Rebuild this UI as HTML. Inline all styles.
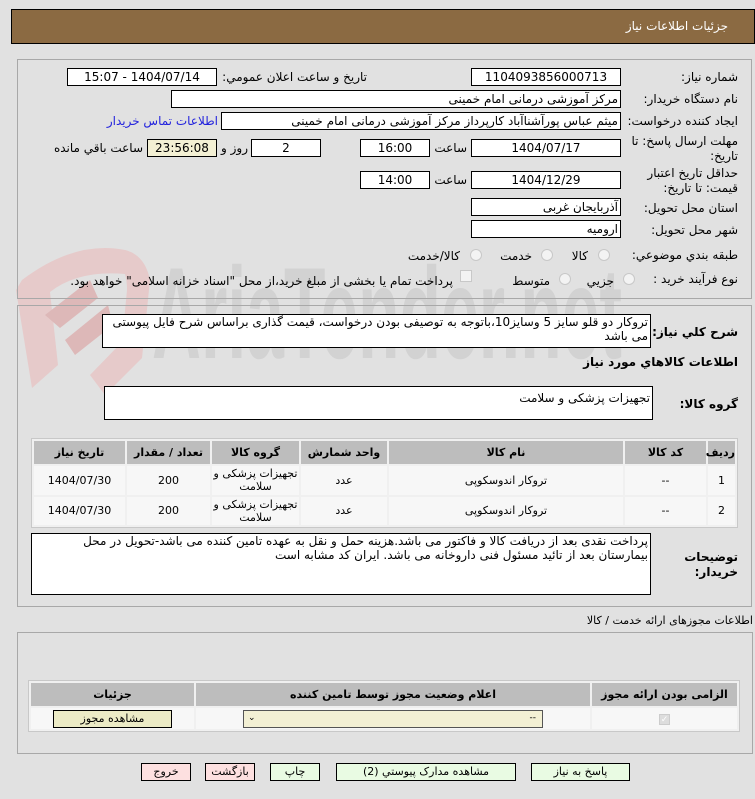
<!DOCTYPE html>
<html><head><meta charset="utf-8">
<style>
*{box-sizing:border-box;margin:0;padding:0}
body{width:755px;height:799px;background:#e1e1e1;font-family:"DejaVu Sans","Liberation Sans",sans-serif;font-size:11px;color:#000;position:relative;overflow:hidden}
.a{position:absolute}
.lbl{position:absolute;direction:rtl;text-align:right;white-space:nowrap;font-size:12px}
.box{position:absolute;background:#fff;border:1px solid #000;direction:rtl;text-align:center;font-size:12px;line-height:16px;white-space:nowrap;overflow:hidden}
.panel{position:absolute;border:1px solid #a8a8a8}
table{border-collapse:separate;border-spacing:2px;position:absolute;background:#f0f0f0;border:1px solid #c8c8c8;direction:rtl;table-layout:fixed}
th{background:#bdbdbd;font-weight:bold;font-size:11px;height:23px}
td{background:#f7f7f7;text-align:center;font-size:11px}
.btn{position:absolute;border:1px solid #000;background:#e9fbe3;text-align:center;font-size:11px;line-height:16px;height:18px;white-space:nowrap;direction:rtl}
.radio{position:absolute;width:12px;height:12px;border-radius:50%;border:1px solid #c8c8c8;background:#f3f3f3}
</style></head><body>
<!-- watermark -->
<svg class="a" style="left:0;top:240px" width="755" height="160">
<path d="M22 40 Q75 0 125 10 L125 34 Q78 30 50 52 L58 125 L32 148 L16 50 Z" fill="#e6caca"/>
<path d="M125 10 Q145 15 150 40 L142 118 L105 155 L90 135 L122 102 L127 50 Q127 40 125 34 Z" fill="#e6caca"/>
<path d="M45 75 L90 40 L98 58 L60 88 Z M65 100 L108 65 L113 85 L75 115 Z" fill="#ddb8b8"/>
<text x="152" y="118" font-family="Liberation Sans" font-weight="bold" font-size="130" fill="#d2d2d2" textLength="470" lengthAdjust="spacingAndGlyphs">AriaTender.net</text>
</svg>
<div class="a" style="left:11px;top:9px;width:744px;height:35px;background:#8b6a42;border:1px solid #000"></div>
<div class="lbl" style="right:27px;top:19px;color:#fff">جزئيات اطلاعات نياز</div>

<div class="panel" style="left:17px;top:59px;width:735px;height:240px"></div>
<div class="lbl" style="right:17px;top:70px">شماره نياز:</div>
<div class="box" style="left:471px;top:68px;width:150px;height:18px">1104093856000713</div>
<div class="lbl" style="right:388px;top:70px">تاريخ و ساعت اعلان عمومي:</div>
<div class="box" style="left:67px;top:68px;width:150px;height:18px">1404/07/14 - 15:07</div>

<div class="lbl" style="right:17px;top:92px">نام دستگاه خريدار:</div>
<div class="box" style="left:171px;top:90px;width:450px;height:18px;text-align:right;padding-right:2px">مرکز آموزشی درمانی امام خمینی</div>

<div class="lbl" style="right:17px;top:114px">ايجاد کننده درخواست:</div>
<div class="box" style="left:221px;top:112px;width:400px;height:18px;text-align:right;padding-right:2px">میثم عباس پورآشناآباد کارپرداز مرکز آموزشی درمانی امام خمینی</div>
<div class="lbl" style="right:537px;top:114px;color:#2222dd">اطلاعات تماس خريدار</div>

<div class="lbl" style="right:17px;top:134px;line-height:15px">مهلت ارسال پاسخ: تا<br>تاريخ:</div>
<div class="box" style="left:471px;top:139px;width:150px;height:18px">1404/07/17</div>
<div class="lbl" style="right:288px;top:141px">ساعت</div>
<div class="box" style="left:360px;top:139px;width:70px;height:18px">16:00</div>
<div class="box" style="left:251px;top:139px;width:70px;height:18px">2</div>
<div class="lbl" style="right:507px;top:141px">روز و</div>
<div class="box" style="left:147px;top:139px;width:70px;height:18px;background:#f3f0d4">23:56:08</div>
<div class="lbl" style="right:612px;top:141px">ساعت باقي مانده</div>

<div class="lbl" style="right:17px;top:166px;line-height:15px">حداقل تاريخ اعتبار<br>قيمت: تا تاريخ:</div>
<div class="box" style="left:471px;top:171px;width:150px;height:18px">1404/12/29</div>
<div class="lbl" style="right:288px;top:173px">ساعت</div>
<div class="box" style="left:360px;top:171px;width:70px;height:18px">14:00</div>

<div class="lbl" style="right:17px;top:201px">استان محل تحويل:</div>
<div class="box" style="left:471px;top:198px;width:150px;height:18px;text-align:right;padding-right:2px">آذربایجان غربی</div>
<div class="lbl" style="right:17px;top:223px">شهر محل تحويل:</div>
<div class="box" style="left:471px;top:220px;width:150px;height:18px;text-align:right;padding-right:2px">ارومیه</div>

<div class="lbl" style="right:17px;top:248px">طبقه بندي موضوعي:</div>
<div class="radio" style="left:598px;top:249px"></div><div class="lbl" style="right:167px;top:249px">کالا</div>
<div class="radio" style="left:541px;top:249px"></div><div class="lbl" style="right:223px;top:249px">خدمت</div>
<div class="radio" style="left:470px;top:249px"></div><div class="lbl" style="right:295px;top:249px">کالا/خدمت</div>

<div class="lbl" style="right:17px;top:272px">نوع فرآيند خريد :</div>
<div class="radio" style="left:623px;top:273px"></div><div class="lbl" style="right:141px;top:274px">جزيي</div>
<div class="radio" style="left:559px;top:273px"></div><div class="lbl" style="right:205px;top:274px">متوسط</div>
<div class="a" style="left:460px;top:270px;width:12px;height:12px;border:1px solid #c8c8c8;background:#f3f3f3"></div>
<div class="lbl" style="right:302px;top:274px">پرداخت تمام يا بخشی از مبلغ خريد،از محل "اسناد خزانه اسلامی" خواهد بود.</div>

<div class="panel" style="left:17px;top:305px;width:735px;height:302px"></div>
<div class="lbl" style="right:17px;top:325px;font-weight:bold">شرح کلي نياز:</div>
<div class="box" style="left:102px;top:314px;width:549px;height:34px;text-align:right;padding-right:2px;white-space:normal;line-height:14px">تروکار دو قلو سایز 5 وسایز10،باتوجه به توصیفی بودن درخواست، قیمت گذاری براساس شرح فایل پیوستی می باشد</div>
<div class="lbl" style="right:17px;top:355px;font-weight:bold">اطلاعات کالاهاي مورد نياز</div>
<div class="lbl" style="right:17px;top:397px;font-weight:bold">گروه کالا:</div>
<div class="box" style="left:104px;top:386px;width:549px;height:34px;text-align:right;padding-right:2px;padding-top:3px">تجهیزات پزشکی و سلامت</div>

<table style="left:31px;top:438px;width:707px;height:90px">
<colgroup><col style="width:27px"><col style="width:81px"><col><col style="width:86px"><col style="width:87px"><col style="width:83px"><col style="width:91px"></colgroup>
<tr><th>رديف</th><th>کد کالا</th><th>نام کالا</th><th>واحد شمارش</th><th>گروه کالا</th><th>تعداد / مقدار</th><th>تاريخ نياز</th></tr>
<tr><td>1</td><td>--</td><td>تروکار اندوسکوپی</td><td>عدد</td><td style="line-height:13px">تجهیزات پزشکی و سلامت</td><td>200</td><td>1404/07/30</td></tr>
<tr><td>2</td><td>--</td><td>تروکار اندوسکوپی</td><td>عدد</td><td style="line-height:13px">تجهیزات پزشکی و سلامت</td><td>200</td><td>1404/07/30</td></tr>
</table>

<div class="lbl" style="right:17px;top:550px;font-weight:bold;line-height:15px">توضيحات<br>خريدار:</div>
<div class="box" style="left:31px;top:533px;width:620px;height:62px;text-align:right;padding-right:2px;white-space:normal;line-height:14px">پرداخت نقدی بعد از دریافت کالا و فاکتور می باشد.هزینه حمل و نقل به عهده تامین کننده می باشد-تحویل در محل بیمارستان بعد از تائید مسئول فنی داروخانه می باشد. ایران کد مشابه است</div>

<div class="lbl" style="right:2px;top:614px;font-size:11px">اطلاعات مجوزهای ارائه خدمت / کالا</div>
<div class="panel" style="left:17px;top:632px;width:736px;height:122px"></div>
<table style="left:28px;top:680px;width:712px;height:52px">
<colgroup><col style="width:145px"><col><col style="width:163px"></colgroup>
<tr><th>الزامی بودن ارائه مجوز</th><th>اعلام وضعیت مجوز توسط تامین کننده</th><th>جزئیات</th></tr>
<tr><td><span style="display:inline-block;width:11px;height:11px;background:#ddd;border:1px solid #ccc;color:#fff;font-size:9px;line-height:10px">✓</span></td>
<td><div style="margin-right:47px;width:300px;height:18px;border:1px solid #555;background:#f3f0d4;text-align:left;padding-left:4px;font-size:9px;line-height:15px;position:relative">⌄<span style="position:absolute;right:6px">--</span></div></td>
<td><div style="margin-right:22px;width:119px;height:18px;border:1px solid #000;background:#ecebc6;line-height:16px">مشاهده مجوز</div></td></tr>
</table>

<div class="btn" style="left:531px;top:763px;width:99px">پاسخ به نياز</div>
<div class="btn" style="left:336px;top:763px;width:180px">مشاهده مدارک پيوستي (2)</div>
<div class="btn" style="left:270px;top:763px;width:50px">چاپ</div>
<div class="btn" style="left:205px;top:763px;width:50px;background:#fde0e0">بازگشت</div>
<div class="btn" style="left:141px;top:763px;width:50px;background:#fde0e0">خروج</div>
</body></html>
